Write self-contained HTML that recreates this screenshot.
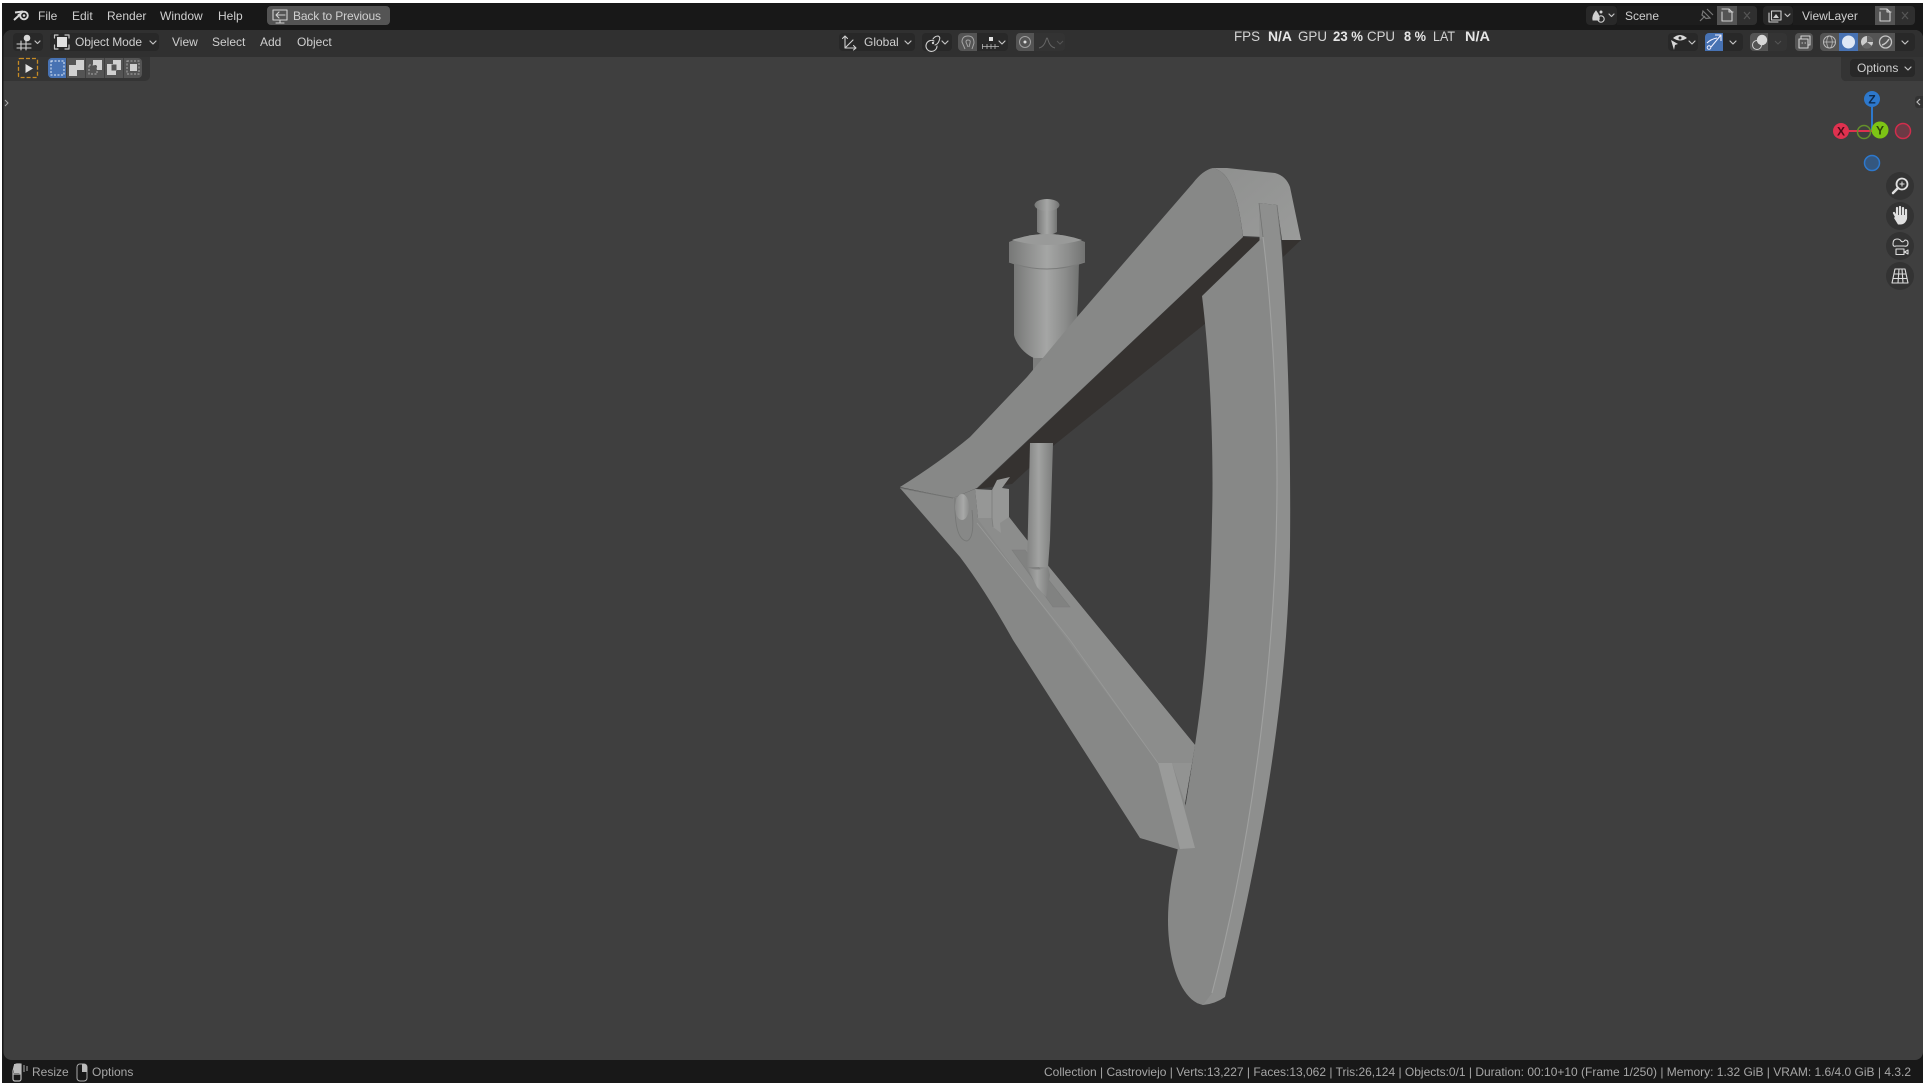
<!DOCTYPE html>
<html><head><meta charset="utf-8"><title>Blender</title>
<style>
html,body{margin:0;padding:0;background:#fff;width:1926px;height:1086px;overflow:hidden}
svg{display:block;position:absolute;left:0;top:0}
text{font-family:"Liberation Sans",sans-serif;font-size:12px;fill:#cfcfcf}
.s{fill:#a6a6a6;font-size:12px}
.st{fill:#d4d4d4;font-size:14px}
.b{font-weight:bold;fill:#e6e6e6}
.i{fill:none;stroke:#d0d0d0;stroke-width:1.1;stroke-linecap:round;stroke-linejoin:round}
.d{fill:none;stroke:#c4c4c4;stroke-width:1.2;stroke-linecap:round;stroke-linejoin:round}
</style></head><body>
<svg width="1926" height="1086" viewBox="0 0 1926 1086" xmlns="http://www.w3.org/2000/svg">
<defs>
<linearGradient id="bot" x1="0" x2="1" y1="0" y2="0"><stop offset="0" stop-color="#777877"/><stop offset=".2" stop-color="#8a8b8a"/><stop offset=".5" stop-color="#a5a6a5"/><stop offset=".78" stop-color="#8c8d8c"/><stop offset="1" stop-color="#727372"/></linearGradient>
<linearGradient id="pin" x1="0" x2="1" y1="0" y2="0"><stop offset="0" stop-color="#828382"/><stop offset=".45" stop-color="#a2a3a2"/><stop offset="1" stop-color="#7c7d7c"/></linearGradient>
<linearGradient id="cap" x1="0" x2="1" y1="0" y2="1"><stop offset="0" stop-color="#8f908f"/><stop offset="1" stop-color="#9a9b9a"/></linearGradient>
<linearGradient id="ball" x1="0" x2="1" y1="0" y2="0"><stop offset="0" stop-color="#8b8c8b"/><stop offset=".6" stop-color="#a8a9a8"/><stop offset="1" stop-color="#8b8c8b"/></linearGradient>
</defs>
<!-- frame -->
<rect x="2" y="3" width="1921" height="1080" fill="#181818"/>
<path d="M3.500 38a8 8 0 0 1 8-8H1915a8 8 0 0 1 8 8V1052a8 8 0 0 1-8 8H11.500a8 8 0 0 1-8-8z" fill="#3f3f3f"/>
<path d="M3.500 57V38a8 8 0 0 1 8-8H1915a8 8 0 0 1 8 8V57z" fill="#303030"/>
<path d="M3.500 57H150V76a5 5 0 0 1-5 5H3.500z" fill="#343434"/>
<path d="M1841 57H1923V81H1847a5 5 0 0 1-6-5z" fill="#343434"/>

<!-- MODEL -->
<!-- bottle -->
<g>
<rect x="1033" y="355" width="12" height="18" fill="#7d7e7d"/>
<path d="M1014 262H1079L1078 300 1076 335C1070 350 1058 356 1047 358H1034C1026 355 1016 345 1014 335z" fill="url(#bot)"/>
<path d="M1009 242Q1047 226 1085 242V262Q1047 276 1009 262z" fill="url(#bot)"/>
<path d="M1009 262Q1047 276 1085 262" fill="none" stroke="#7b7c7b" stroke-width="1"/>
<path d="M1037 208H1057V232Q1047 238 1037 232z" fill="url(#bot)"/>
<ellipse cx="1047" cy="205" rx="12.500" ry="6" fill="url(#bot)"/>
<path d="M1012 240Q1047 228 1082 240Q1047 250 1012 240z" fill="#999a99"/>
</g>
<!-- underside dark -->
<path d="M1243 237L1262 238 1212 290 1206 323 1053 446 1012 484 977 489z" fill="#353230"/>
<path d="M1282 240H1301L1283 257z" fill="#353230"/>
<!-- upper arm face -->
<path d="M900 487Q940 462 970 437L1027 377 1077 317 1193 183Q1203 170 1213 168C1230 172 1238 195 1243 237L977 488 953 498z" fill="#878887"/>
<!-- end cap -->
<path d="M1213 168L1227 168 1275 173Q1286 176 1290 187L1301 240 1282 240 1277 205 1259 203 1263 237 1243 236C1238 195 1230 172 1213 168z" fill="url(#cap)"/>
<!-- blade -->
<path d="M1259 203L1277 205 1281 240C1288 330 1291 450 1290 547 1288 680 1268 820 1225 997Q1215 1004 1203 1005L1197 1003 1212 960 1240 850 1258 700 1262 400z" fill="#8e8f8e"/>
<path d="M1202 296L1263 237C1271 300 1277 400 1277 480 1277 640 1255 830 1212 993L1203 1005 1197 1003C1182 995 1172 970 1169 940 1166 910 1170 885 1177 853 1183 825 1188 790 1195 745 1205 680 1210 620 1212 520 1214 450 1210 360 1202 296z" fill="#878887"/>
<path d="M1263 237C1271 300 1277 400 1277 480 1277 640 1255 830 1212 993" fill="none" stroke="#a0a1a0" stroke-width="1.100"/>
<path d="M1259 203L1263 237M1277 205L1281 240" stroke="#727372" stroke-width=".8" fill="none"/>
<!-- lower arm -->
<path d="M900 488L953 498 975 489 978 518 1009 517 1027 540 1195 745 1192 763 1185 803 1195 848 1180 850 1140 838 1013 640Q985 590 960 557z" fill="#878887"/>
<path d="M977 518L1009 517 1027 540 1195 745 1192 763H1158z" fill="#8c8d8c"/>
<path d="M977 523L1070 640 1158 763" fill="none" stroke="#989998" stroke-width=".9"/>
<path d="M1172 763H1192L1185 803z" fill="#929392"/>
<path d="M1158 763H1172L1195 848 1180 849z" fill="#9a9b9a"/>
<path d="M1012 550H1025L1070 607H1053z" fill="#818281" stroke="#7c7d7c" stroke-width=".6"/>
<path d="M900 488L953 498" stroke="#727372" stroke-width="1" fill="none"/>
<!-- disc, ball -->
<path d="M955 498Q954 540 967 541 975 538 972 510" fill="none" stroke="#767776" stroke-width=".9"/>
<ellipse cx="962" cy="507" rx="7" ry="13" fill="url(#ball)"/>
<!-- bracket -->
<path d="M975 489L992 490 997 480 1010 477 1002 488 1009 489V517L1000 523 1001 533 993 527 992 518 978 518z" fill="#969796"/>
<path d="M992 490V518L993 527" stroke="#7e7f7e" fill="none" stroke-width=".9"/>
<!-- pin -->
<path d="M1030 443H1053L1050 540 1048 567H1027z" fill="url(#pin)"/>
<path d="M1027 567Q1037 572 1048 567L1050 575 1046 597 1037 587z" fill="url(#pin)"/>

<!-- TOP BAR -->
<g fill="none" stroke="#d8d8d8"><circle cx="24" cy="15.500" r="3.800" stroke-width="1.900"/><path d="M14 20L20 14.500M15 12.500L23 11.500M18 15.500L20 14" stroke-width="2"/></g>
<circle cx="24" cy="15.500" r="1.300" fill="#d8d8d8"/>
<text x="38" y="20">File</text><text x="72" y="20">Edit</text><text x="107" y="20">Render</text><text x="160" y="20">Window</text><text x="218" y="20">Help</text>
<rect x="267" y="6" width="123" height="19" rx="4" fill="#545454"/>
<path class="i" d="M273 10H287V20H273zM280 20V23M276 23H284M285 15H276M279 12L276 15 279 18"/>
<text x="293" y="20" textLength="88" lengthAdjust="spacing">Back to Previous</text>

<!-- scene group -->
<rect x="1586" y="6" width="31" height="19" rx="4" fill="#282828"/>
<rect x="1617" y="6" width="100" height="19" fill="#1d1d1d"/>
<rect x="1717" y="6" width="20" height="19" fill="#545454"/>
<path d="M1737 6H1753a4 4 0 0 1 4 4V21a4 4 0 0 1-4 4H1737z" fill="#2f2f2f"/>
<path d="M1593 20Q1592 16 1596 11 1600 16 1599 20z" fill="#d0d0d0" stroke="#d0d0d0"/><circle cx="1601" cy="12" r="1.500" fill="#d0d0d0"/><circle cx="1601" cy="19" r="3.200" class="i"/>
<path class="d" d="M1609 14L1611.500 16.500 1614 14"/>
<text x="1625" y="20">Scene</text>
<path d="M1700 21L1705 16M1703 11L1710 18 1706 18.500 1702 15zM1707 9L1713 15" fill="none" stroke="#777" stroke-width="1.200"/>
<path class="i" d="M1722 12V21H1732V12L1729 9H1722M1725 9H1729V12H1733"/>
<path d="M1744 12L1750 19M1750 12L1744 19" stroke="#555" stroke-width="1.200"/>
<rect x="1763" y="6" width="30" height="19" rx="4" fill="#282828"/>
<rect x="1793" y="6" width="82" height="19" fill="#1d1d1d"/>
<rect x="1875" y="6" width="20" height="19" fill="#545454"/>
<path d="M1895 6H1911a4 4 0 0 1 4 4V21a4 4 0 0 1-4 4H1895z" fill="#2f2f2f"/>
<path class="i" d="M1769 13V22H1778M1771.500 11V20H1781V11z"/><path d="M1773 18L1776 14 1779 18z" fill="#d0d0d0"/>
<path class="d" d="M1785 14L1787.500 16.500 1790 14"/>
<text x="1802" y="20">ViewLayer</text>
<path class="i" d="M1880 12V21H1890V12L1887 9H1880M1883 9H1887V12H1891"/>
<path d="M1902 12L1908 19M1908 12L1902 19" stroke="#555" stroke-width="1.200"/>

<!-- HEADER ROW -->
<rect x="13" y="33" width="30" height="18" rx="4" fill="#282828"/>
<path class="i" d="M17 44H31M17 48H31M21 41V50M26 41V50" stroke-width=".9"/><circle cx="27" cy="38" r="3.300" fill="#d8d8d8"/>
<path class="d" d="M35 41L37.500 43.500 40 41"/>
<rect x="50" y="33" width="109" height="18" rx="4" fill="#282828"/>
<rect x="57" y="37" width="10" height="10" fill="#e0e0e0"/>
<path class="d" d="M54.500 38V35H58M65 35H69V38M54.500 45V49H58M65 49H69V45" stroke-width="1"/>
<text x="75" y="46" textLength="67" lengthAdjust="spacing">Object Mode</text>
<path class="d" d="M150 41L153 44 156 41"/>
<text x="172" y="46">View</text><text x="212" y="46">Select</text><text x="260" y="46">Add</text><text x="297" y="46">Object</text>

<!-- center -->
<rect x="839" y="33" width="76" height="18" rx="4" fill="#282828"/>
<path class="i" d="M845 36V48H856M845 48L853 40M842.500 38.500L845 36 847.500 38.500M853.500 45.500L856 48 853.500 50"/>
<text x="864" y="46">Global</text>
<path class="d" d="M905 41L908 44 911 41"/>
<rect x="922" y="33" width="30" height="18" rx="4" fill="#282828"/>
<path class="i" d="M934 41A5.500 5.500 0 1 0 937 46M933 39Q935 36 938 36 941 37 939 41 938 44 935 45"/><circle cx="933" cy="43" r="1.200" fill="#d0d0d0"/>
<path class="d" d="M942 41L945 44 948 41"/>
<path d="M962 33H977V51H962a4 4 0 0 1-4-4V37a4 4 0 0 1 4-4z" fill="#545454"/>
<path d="M965 49L962 42Q962 36 968 36 974 36 974 43L972 49M968 47L966 42Q966 40 968 40 971 40 970 43L969 47" fill="none" stroke="#a4a4a4" stroke-width="1"/>
<path d="M977 33H1004a4 4 0 0 1 4 4V47a4 4 0 0 1-4 4H977z" fill="#282828"/>
<rect x="989" y="37" width="4" height="4" fill="#e0e0e0"/>
<path d="M982 46.500H999M982.500 44V49M987 44V49M991 44V49M995 44V49" fill="none" stroke="#b8b8b8" stroke-width=".8"/>
<path class="d" d="M999 41L1002 44 1005 41"/>
<path d="M1020 33H1034V51H1020a4 4 0 0 1-4-4V37a4 4 0 0 1 4-4z" fill="#545454"/>
<circle cx="1025" cy="42" r="5.500" fill="none" stroke="#a0a0a0"/><circle cx="1025" cy="42" r="1.500" fill="#e0e0e0"/>
<path d="M1034 33H1061a4 4 0 0 1 4 4V47a4 4 0 0 1-4 4H1034z" fill="#333"/>
<path d="M1039 48Q1044 47 1046 40 1047 36 1048 40 1050 47 1055 48" fill="none" stroke="#666"/>
<path d="M1057 41L1060 44 1063 41" fill="none" stroke="#555"/>

<!-- stats -->
<text class="st" x="1234" y="41" textLength="26" lengthAdjust="spacingAndGlyphs">FPS</text>
<text class="st b" x="1268" y="41" textLength="24" lengthAdjust="spacingAndGlyphs">N/A</text>
<text class="st" x="1298" y="41" textLength="29" lengthAdjust="spacingAndGlyphs">GPU</text>
<text class="st b" x="1333" y="41" textLength="30" lengthAdjust="spacingAndGlyphs">23 %</text>
<text class="st" x="1367" y="41" textLength="28" lengthAdjust="spacingAndGlyphs">CPU</text>
<text class="st b" x="1404" y="41" textLength="22" lengthAdjust="spacingAndGlyphs">8 %</text>
<text class="st" x="1433" y="41" textLength="22" lengthAdjust="spacingAndGlyphs">LAT</text>
<text class="st b" x="1465" y="41" textLength="25" lengthAdjust="spacingAndGlyphs">N/A</text>

<!-- right header -->
<rect x="1668" y="33" width="30" height="18" rx="4" fill="#282828"/>
<path d="M1673 38Q1680 32 1687 38 1680 43 1673 38zM1671 40L1678 44 1675 45 1674 50z" fill="#d8d8d8"/><circle cx="1680" cy="38" r="1.500" fill="#282828"/>
<path class="d" d="M1689 41L1692 44 1695 41"/>
<path d="M1709 33H1723V51H1705V37a4 4 0 0 1 4-4z" fill="#4772b3"/>
<path d="M1707 43Q1711 39 1717 38M1711 47L1721 35M1715 35H1721V41" fill="none" stroke="#eef" stroke-width="1.100"/><circle cx="1709" cy="47.500" r="1.800" fill="none" stroke="#eef"/>
<path d="M1723 33H1739a4 4 0 0 1 4 4V47a4 4 0 0 1-4 4H1723z" fill="#282828"/>
<path class="d" d="M1730 41L1733 44 1736 41"/>
<path d="M1754 33H1768V51H1754a4 4 0 0 1-4-4V37a4 4 0 0 1 4-4z" fill="#545454"/>
<circle cx="1757" cy="45" r="4.500" fill="none" stroke="#d0d0d0"/>
<circle cx="1762" cy="40" r="5.200" fill="#d8d8d8"/>
<path d="M1768 33H1783a4 4 0 0 1 4 4V47a4 4 0 0 1-4 4H1768z" fill="#343434"/>
<path d="M1775 41L1778 44 1781 41" fill="none" stroke="#555"/>
<rect x="1795" y="33" width="18" height="18" rx="4" fill="#545454"/>
<path class="i" d="M1799 39V48H1808V39zM1801 39V36H1810V45H1808M1802 43H1802.500M1805 43H1805.500" stroke-width="1"/>
<path d="M1820 37a4 4 0 0 1 4-4H1839V51H1824a4 4 0 0 1-4-4z" fill="#545454"/>
<circle cx="1829.500" cy="42" r="6" fill="none" stroke="#bbb"/><ellipse cx="1829.500" cy="42" rx="2.800" ry="6" fill="none" stroke="#bbb" stroke-width=".8"/><path d="M1823.500 42H1835.500" stroke="#bbb" stroke-width=".8"/>
<rect x="1839" y="33" width="19" height="18" fill="#4772b3"/><circle cx="1848.500" cy="42" r="6.500" fill="#dfe8f5"/>
<rect x="1858" y="33" width="18" height="18" fill="#545454"/>
<circle cx="1867" cy="42" r="6" fill="#ccc"/><path d="M1867 42V36A6 6 0 0 1 1873 42zM1867 42L1872 46A6 6 0 0 1 1862 46z" fill="#666"/>
<rect x="1876" y="33" width="19" height="18" fill="#545454"/>
<circle cx="1885.500" cy="42" r="6" fill="none" stroke="#c4c4c4" stroke-width="1.300"/><path d="M1882 45Q1886 44 1889 39" stroke="#c4c4c4" fill="none" stroke-width="1.500"/>
<path d="M1895 33H1911a4 4 0 0 1 4 4V47a4 4 0 0 1-4 4H1895z" fill="#282828"/>
<path class="d" d="M1902 41L1905 44 1908 41"/>

<!-- tool row -->
<rect x="18.500" y="58.500" width="19" height="19" rx="1.500" fill="none" stroke="#c78b24" stroke-width="1.300" stroke-dasharray="4 2"/>
<path d="M25.500 64V73L33 68.500z" fill="#e2e2e2"/>
<rect x="48" y="58" width="94" height="20" rx="4" fill="#545454"/>
<path d="M52 58H66V78H52a4 4 0 0 1-4-4V62a4 4 0 0 1 4-4z" fill="#4772b3"/>
<rect x="51" y="61" width="13" height="14" fill="none" stroke="#e6eefa" stroke-width="1" stroke-dasharray="2 1.500"/>
<path d="M69 65H76V60H84V70H77V76H69z" fill="#d0d0d0"/>
<rect x="89" y="65" width="8" height="9" fill="none" stroke="#aaa" stroke-dasharray="2 1.500"/><path d="M93 60H102V70H97V65H93z" fill="#d0d0d0"/>
<path d="M107 64H113V60H121V70H116V75H107zM111.500 64.500V70.500H116.500V64.500z" fill="#d0d0d0" fill-rule="evenodd"/>
<rect x="127" y="61" width="12" height="13" fill="none" stroke="#aaa" stroke-dasharray="2 1.500"/><rect x="130" y="64" width="7" height="7" fill="#d0d0d0"/>
<rect x="66" y="58" width=".8" height="20" fill="#3c3c3c"/><rect x="85" y="58" width=".8" height="20" fill="#3c3c3c"/><rect x="104" y="58" width=".8" height="20" fill="#3c3c3c"/><rect x="123" y="58" width=".8" height="20" fill="#3c3c3c"/>
<rect x="1850" y="59" width="65" height="18" rx="4" fill="#282828"/>
<text x="1857" y="72">Options</text>
<path class="d" d="M1905 67L1908 70 1911 67"/>
<path d="M5 100L8 103 5 106" fill="none" stroke="#aaa"/>
<path d="M1923 96H1918a3 3 0 0 0-3 3V105a3 3 0 0 0 3 3H1923z" fill="#333"/>
<path d="M1920 99L1917 102 1920 105" fill="none" stroke="#bbb" stroke-width="1.200"/>

<!-- gizmo -->
<path d="M1872 99V131" stroke="#2d78cc" stroke-width="2"/>
<path d="M1841 131H1880" stroke="#e0314f" stroke-width="2"/>
<circle cx="1864" cy="132" r="6.500" fill="none" stroke="#64902a" stroke-width="1.500"/>
<circle cx="1872" cy="163" r="7.500" fill="#34577f" stroke="#2d78cc" stroke-width="1.500"/>
<circle cx="1903" cy="131" r="7.500" fill="#6c3a45" stroke="#d12d4c" stroke-width="1.500"/>
<circle cx="1841" cy="131" r="8" fill="#e0314f"/>
<circle cx="1872" cy="99" r="8" fill="#2d78cc"/>
<circle cx="1880" cy="130" r="8.500" fill="#7dc415"/>
<text x="1841" y="135.500" text-anchor="middle" style="font-size:12px;font-weight:bold;fill:#4c0d1a">X</text>
<text x="1872" y="103.500" text-anchor="middle" style="font-size:12px;font-weight:bold;fill:#0d2a4d">Z</text>
<text x="1880" y="134.500" text-anchor="middle" style="font-size:12px;font-weight:bold;fill:#2b4409">Y</text>
<!-- nav buttons -->
<circle cx="1900" cy="186" r="14" fill="#333"/><circle cx="1900" cy="216" r="14" fill="#333"/><circle cx="1900" cy="246" r="14" fill="#333"/><circle cx="1900" cy="276" r="14" fill="#333"/>
<circle cx="1902" cy="184" r="5.500" fill="none" stroke="#e0e0e0" stroke-width="1.800"/><path d="M1898 188L1893 193" stroke="#e0e0e0" stroke-width="2.500" stroke-linecap="round"/><path d="M1899.500 184H1904.500M1902 181.500V186.500" stroke="#e0e0e0"/>
<path d="M1894 213L1899 222M1897 208V216M1900 207V216M1903 208V216M1906 210V218" stroke="#e0e0e0" stroke-width="2.200" stroke-linecap="round" fill="none"/><path d="M1896.500 215H1907V219Q1905 225 1900 224.500H1898L1894 218z" fill="#e0e0e0"/>
<path class="i" d="M1893 244Q1893 239 1897 239 1900 239 1901 241 1903 243 1905 240 1908 240 1908 243 1908 247 1904 246H1896Q1893 247 1893 244zM1896 249H1904V254.500H1896zM1904.500 252L1908 250V254z" style="stroke:#ddd"/>
<path class="i" d="M1895 269H1905L1908 283H1892zM1899 269L1898 283M1902 269L1903 283M1894 274H1906M1893 278.500H1907" style="stroke:#ddd"/>

<!-- status bar -->
<path class="d" d="M14 1067a3 3 0 0 1 3-3H20V1074H13V1071zM13 1074V1079a2 2 0 0 0 2 2H19a2 2 0 0 0 2-2V1064" style="stroke:#bbb"/>
<path d="M24 1065V1072M27 1066V1071" stroke="#aaa" fill="none"/><rect x="14" y="1064" width="6" height="9" fill="#bbb"/>
<text class="s" x="32" y="1076">Resize</text>
<path d="M77 1073V1067a3 3 0 0 1 3-3H84a3 3 0 0 1 3 3V1078a3 3 0 0 1-3 3H80a3 3 0 0 1-3-3z" fill="none" stroke="#aaa"/><path d="M82 1064H84a3 3 0 0 1 3 3V1072H82z" fill="#bbb"/>
<text class="s" x="92" y="1076">Options</text>
<text class="s" x="1044" y="1076" textLength="867" lengthAdjust="spacingAndGlyphs">Collection | Castroviejo | Verts:13,227 | Faces:13,062 | Tris:26,124 | Objects:0/1 | Duration: 00:10+10 (Frame 1/250) | Memory: 1.32 GiB | VRAM: 1.6/4.0 GiB | 4.3.2</text>
</svg>
</body></html>
